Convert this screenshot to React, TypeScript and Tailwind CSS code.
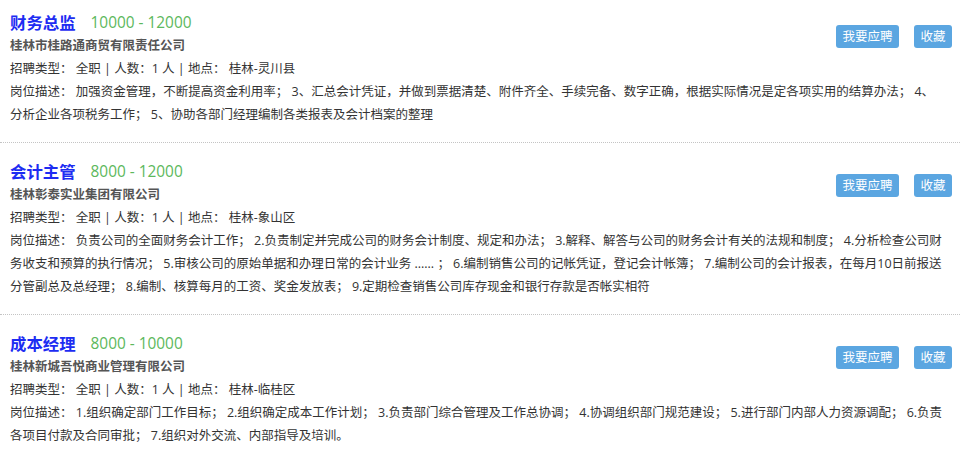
import React from 'react';

interface JobProps {
  title: string;
  salary: string;
  company: string;
  type: string;
  count: string;
  place: string;
  lines: string[];
  first?: boolean;
}

const JobItem: React.FC<JobProps> = ({ title, salary, company, type, count, place, lines, first }) => {
  return (
    <div
      className={`border-b border-dotted border-[#c4c4c4] pb-[16px] pl-[10px] pr-[8px] ${first ? 'pt-[11px]' : 'pt-[17px]'}`}
    >
      <div className="flex justify-between">
        <div>
          <div className="flex h-[23px] items-center gap-[15px]">
            <h3 className="m-0 text-[16.4px] font-bold leading-[23px] text-[#1d2cf2]">{title}</h3>
            <span className="text-[15.4px] leading-[23px] text-[#5cb85c]">{salary}</span>
          </div>
          <div className="text-[12.5px] font-bold leading-[23px] text-[#555]">{company}</div>
          <div className="text-[12.5px] leading-[23px] text-[#333]">
            招聘类型： {type} | 人数：{count} 人 | 地点： {place}
          </div>
        </div>
        <div className="mt-[14px] flex gap-[15px]">
          <button className="h-[23px] w-[63px] rounded-[3px] bg-[#5ba6e1] text-[12.5px] leading-[23px] text-white">
            我要应聘
          </button>
          <button className="h-[23px] w-[38px] rounded-[3px] bg-[#5ba6e1] text-[12.5px] leading-[23px] text-white">
            收藏
          </button>
        </div>
      </div>
      <div className="text-[12.5px] leading-[23px] text-[#333]">
        {lines.map((l, i) => (
          <div key={i} className="whitespace-nowrap">
            {l}
          </div>
        ))}
      </div>
    </div>
  );
};

const jobs: JobProps[] = [
  {
    title: '财务总监',
    salary: '10000 - 12000',
    company: '桂林市桂路通商贸有限责任公司',
    type: '全职',
    count: '1',
    place: '桂林-灵川县',
    lines: [
      '岗位描述： 加强资金管理，不断提高资金利用率； 3、汇总会计凭证，并做到票据清楚、附件齐全、手续完备、数字正确，根据实际情况是定各项实用的结算办法； 4、',
      '分析企业各项税务工作； 5、协助各部门经理编制各类报表及会计档案的整理',
    ],
  },
  {
    title: '会计主管',
    salary: '8000 - 12000',
    company: '桂林彰泰实业集团有限公司',
    type: '全职',
    count: '1',
    place: '桂林-象山区',
    lines: [
      '岗位描述： 负责公司的全面财务会计工作； 2.负责制定并完成公司的财务会计制度、规定和办法； 3.解释、解答与公司的财务会计有关的法规和制度； 4.分析检查公司财',
      '务收支和预算的执行情况； 5.审核公司的原始单据和办理日常的会计业务 ...... ； 6.编制销售公司的记帐凭证，登记会计帐簿； 7.编制公司的会计报表，在每月10日前报送',
      '分管副总及总经理； 8.编制、核算每月的工资、奖金发放表； 9.定期检查销售公司库存现金和银行存款是否帐实相符',
    ],
  },
  {
    title: '成本经理',
    salary: '8000 - 10000',
    company: '桂林新城吾悦商业管理有限公司',
    type: '全职',
    count: '1',
    place: '桂林-临桂区',
    lines: [
      '岗位描述： 1.组织确定部门工作目标； 2.组织确定成本工作计划； 3.负责部门综合管理及工作总协调； 4.协调组织部门规范建设； 5.进行部门内部人力资源调配； 6.负责',
      '各项目付款及合同审批； 7.组织对外交流、内部指导及培训。',
    ],
  },
];

export default function App() {
  return (
    <div className="h-[462px] w-[960px] overflow-hidden bg-white font-['Open_Sans','Noto_Sans_CJK_SC',sans-serif]">
      {jobs.map((j, i) => (
        <JobItem key={j.title} {...j} first={i === 0} />
      ))}
    </div>
  );
}
